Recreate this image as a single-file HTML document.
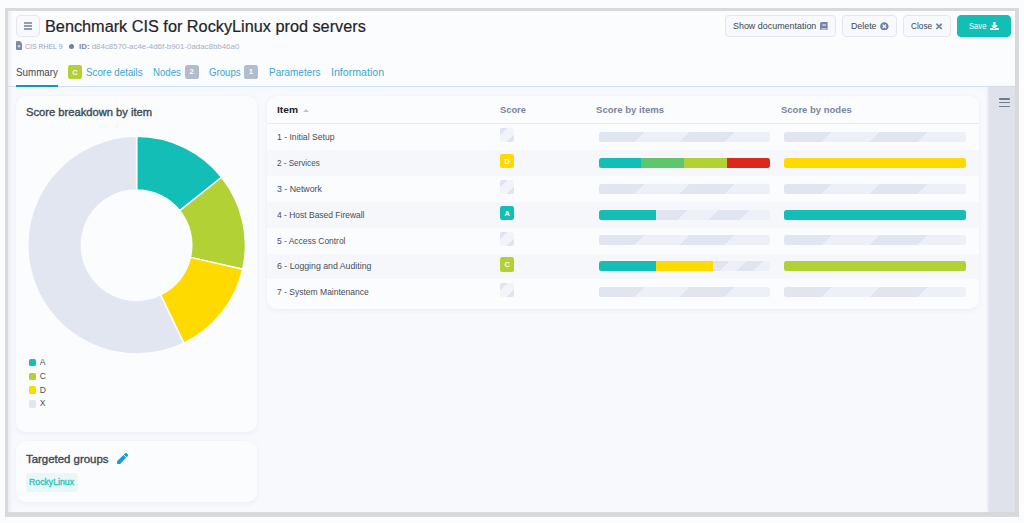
<!DOCTYPE html>
<html><head><meta charset="utf-8">
<style>
*{box-sizing:border-box;margin:0;padding:0}
html,body{width:1024px;height:523px;overflow:hidden;background:#fbfcfe;font-family:"Liberation Sans",sans-serif;color:#36474e}
.abs{position:absolute}
#frame{position:absolute;left:5px;top:8px;width:1014px;height:509px;background:#d9d9d9}
#inner{position:absolute;left:8px;top:11px;width:1007px;height:501px;background:#fbfcfe}
#content{position:absolute;left:8px;top:87px;width:1007px;height:425px;background:#f8f9fc}
.t{position:absolute;white-space:nowrap;line-height:1}
.card{position:absolute;background:#fbfcfe;border-radius:10px;box-shadow:0 1.5px 4px rgba(222,227,242,.45)}
.btn{position:absolute;height:22px;top:15px;border:1px solid #e3e6f0;border-radius:4px;background:#f8f9fc}
.badge{position:absolute;width:14px;height:14px;border-radius:2px;color:#fff;font-size:7px;font-weight:bold;text-align:center;line-height:14px}
.empty{position:absolute;width:14.200px;height:14.200px;border-radius:2px;background:linear-gradient(135deg,#dfe5f0 28%,#f3f4f9 28%,#f3f4f9 72%,#dfe5f0 72%)}
.row{position:absolute;left:267px;width:712px;height:25.9px}
.row.alt{background:#f6f7fb}
.bar{position:absolute;height:10px;border-radius:2.5px;overflow:hidden}
.bar i{position:absolute;top:0;height:10px;display:block}
.stripe{background:linear-gradient(135deg,#e0e5f0 25%,#eef0f7 25%,#eef0f7 50%,#e0e5f0 50%,#e0e5f0 75%,#eef0f7 75%)}
</style></head><body>
<div id="frame"></div><div id="inner"></div><div id="content"></div><div class="abs" style="left:8px;top:11px;width:5px;height:501px;background:linear-gradient(90deg,rgba(222,226,242,.55),rgba(222,226,242,0))"></div>

<div class="abs" style="left:16px;top:15px;width:24px;height:22.300px;border:1px solid #e4e7f2;border-radius:4px;background:#f8f9fc"></div>
<div class="abs" style="left:24px;top:22.1px;width:8px;height:1.600px;background:#929cb8"></div>
<div class="abs" style="left:24px;top:25.1px;width:8px;height:1.600px;background:#929cb8"></div>
<div class="abs" style="left:24px;top:28.1px;width:8px;height:1.600px;background:#929cb8"></div>
<div class="abs" style="left:68.7px;top:43.5px;width:5.400px;height:5.400px;border-radius:3px;background:#72809d"></div>
<div class="btn" style="left:725px;width:111px;"></div>
<div class="btn" style="left:842px;width:55px;"></div>
<div class="btn" style="left:903px;width:48px;"></div>
<div class="btn" style="left:957px;width:54px;background:#13beb7;border-color:#13beb7"></div>
<div class="abs" style="left:67.9px;top:64.7px;width:14.2px;height:14.3px;border-radius:2.2px;background:#b1d135"></div><div class="t" style="left:67.9px;width:14.2px;top:69px;font-size:7.5px;font-weight:bold;color:#fff;text-align:center;opacity:.95">C</div>
<div class="abs" style="left:184.6px;top:64.9px;width:14.4px;height:14.6px;border-radius:2.6px;background:#b3bbcd"></div><div class="t" style="left:184.6px;width:14.4px;top:68px;font-size:7.8px;font-weight:bold;color:#fff;text-align:center;opacity:.95">2</div>
<div class="abs" style="left:243.9px;top:64.9px;width:14.3px;height:14.6px;border-radius:2.6px;background:#b3bbcd"></div><div class="t" style="left:243.9px;width:14.3px;top:68px;font-size:7.8px;font-weight:bold;color:#fff;text-align:center;opacity:.95">1</div>
<div class="abs" style="left:8px;top:86px;width:1007px;height:1px;background:#d6dfee"></div>
<div class="abs" style="left:16px;top:85px;width:42px;height:2px;background:#0f96c5"></div>
<div class="abs" style="left:988.7px;top:87px;width:26.300px;height:425px;background:#dfe2eb;box-shadow:-1px 0 2.500px rgba(205,212,232,.7)"></div>
<div class="abs" style="left:998.8px;top:97.9px;width:11.200px;height:1.700px;border-radius:.8px;background:#727c8b"></div>
<div class="abs" style="left:998.8px;top:101.8px;width:11.200px;height:1.700px;border-radius:.8px;background:#727c8b"></div>
<div class="abs" style="left:998.8px;top:105.6px;width:11.200px;height:1.700px;border-radius:.8px;background:#727c8b"></div>
<div class="card" style="left:16.3px;top:95.8px;width:241px;height:335.800px"></div>
<svg class="abs" style="left:0;top:0" width="270" height="370" viewBox="0 0 270 370"><path d="M136.60 136.30A108.8 108.8 0 0 1 221.66 177.26L179.76 210.68A55.2 55.2 0 0 0 136.60 189.90Z" fill="#13beb7" stroke="#fbfcfe" stroke-width="1.5" stroke-linejoin="round"/><path d="M221.66 177.26A108.8 108.8 0 0 1 242.67 269.31L190.42 257.38A55.2 55.2 0 0 0 179.76 210.68Z" fill="#b1d135" stroke="#fbfcfe" stroke-width="1.5" stroke-linejoin="round"/><path d="M242.67 269.31A108.8 108.8 0 0 1 183.81 343.13L160.55 294.83A55.2 55.2 0 0 0 190.42 257.38Z" fill="#ffda00" stroke="#fbfcfe" stroke-width="1.5" stroke-linejoin="round"/><path d="M183.81 343.13A108.8 108.8 0 1 1 136.60 136.30L136.60 189.90A55.2 55.2 0 1 0 160.55 294.83Z" fill="#e1e6f0" stroke="#fbfcfe" stroke-width="1.5" stroke-linejoin="round"/></svg>
<div class="abs" style="left:28.9px;top:358.90px;width:7.300px;height:7.600px;border-radius:1.600px;background:#13beb7"></div>
<div class="abs" style="left:28.9px;top:372.62px;width:7.300px;height:7.600px;border-radius:1.600px;background:#b1d135"></div>
<div class="abs" style="left:28.9px;top:386.34px;width:7.300px;height:7.600px;border-radius:1.600px;background:#ffda00"></div>
<div class="abs" style="left:28.9px;top:400.06px;width:7.300px;height:7.600px;border-radius:1.600px;background:#e1e6f0"></div>
<div class="card" style="left:16.3px;top:440.7px;width:241px;height:61.700px"></div>
<div class="abs" style="left:26px;top:473px;width:52px;height:19px;border-radius:3px;background:#e7f8f7"></div>
<div class="card" style="left:267px;top:95.8px;width:712.300px;height:213.600px"></div>
<div class="abs" style="left:302.6px;top:108.5px;width:0;height:0;border-left:3.2px solid transparent;border-right:3.2px solid transparent;border-bottom:3.5px solid #b9c3dc"></div>
<div class="abs" style="left:267px;top:123px;width:712px;height:1px;background:#e6eaf3"></div>
<div class="empty" style="left:500.1px;top:127.9px"></div>
<div class="bar" style="left:598.7px;top:131.8px;width:171px"><i class="stripe" style="left:0.00px;width:171.00px"></i></div>
<div class="bar" style="left:783.8px;top:131.8px;width:182.2px"><i class="stripe" style="left:0.00px;width:182.20px"></i></div>
<div class="row alt" style="top:149.9px"></div>
<div class="abs" style="left:500.1px;top:153.70000000000002px;width:14.3px;height:14.4px;border-radius:2.2px;background:#ffda00"></div><div class="t" style="left:500.1px;width:14.3px;top:158px;font-size:7.4px;font-weight:bold;color:#fff;text-align:center;opacity:.95">D</div>
<div class="bar" style="left:598.7px;top:157.70000000000002px;width:171px"><i style="left:0.00px;width:42.75px;background:#13beb7"></i><i style="left:42.75px;width:42.75px;background:#5fc66e"></i><i style="left:85.50px;width:42.75px;background:#b1d135"></i><i style="left:128.25px;width:42.75px;background:#da291c"></i></div>
<div class="bar" style="left:783.8px;top:157.70000000000002px;width:182.2px"><i style="left:0.00px;width:182.20px;background:#ffda00"></i></div>
<div class="empty" style="left:500.1px;top:179.7px"></div>
<div class="bar" style="left:598.7px;top:183.60000000000002px;width:171px"><i class="stripe" style="left:0.00px;width:171.00px"></i></div>
<div class="bar" style="left:783.8px;top:183.60000000000002px;width:182.2px"><i class="stripe" style="left:0.00px;width:182.20px"></i></div>
<div class="row alt" style="top:201.7px"></div>
<div class="abs" style="left:500.1px;top:205.5px;width:14.3px;height:14.4px;border-radius:2.2px;background:#13beb7"></div><div class="t" style="left:500.1px;width:14.3px;top:210px;font-size:7.4px;font-weight:bold;color:#fff;text-align:center;opacity:.95">A</div>
<div class="bar" style="left:598.7px;top:209.5px;width:171px"><i style="left:0.00px;width:57.00px;background:#13beb7"></i><i class="stripe" style="left:57.00px;width:114.00px"></i></div>
<div class="bar" style="left:783.8px;top:209.5px;width:182.2px"><i style="left:0.00px;width:182.20px;background:#13beb7"></i></div>
<div class="empty" style="left:500.1px;top:231.5px"></div>
<div class="bar" style="left:598.7px;top:235.4px;width:171px"><i class="stripe" style="left:0.00px;width:171.00px"></i></div>
<div class="bar" style="left:783.8px;top:235.4px;width:182.2px"><i class="stripe" style="left:0.00px;width:182.20px"></i></div>
<div class="row alt" style="top:253.5px"></div>
<div class="abs" style="left:500.1px;top:257.3px;width:14.3px;height:14.4px;border-radius:2.2px;background:#b1d135"></div><div class="t" style="left:500.1px;width:14.3px;top:261px;font-size:7.4px;font-weight:bold;color:#fff;text-align:center;opacity:.95">C</div>
<div class="bar" style="left:598.7px;top:261.3px;width:171px"><i style="left:0.00px;width:57.00px;background:#13beb7"></i><i style="left:57.00px;width:57.00px;background:#ffda00"></i><i class="stripe" style="left:114.00px;width:57.00px"></i></div>
<div class="bar" style="left:783.8px;top:261.3px;width:182.2px"><i style="left:0.00px;width:182.20px;background:#b1d135"></i></div>
<div class="empty" style="left:500.1px;top:283.3px"></div>
<div class="bar" style="left:598.7px;top:287.2px;width:171px"><i class="stripe" style="left:0.00px;width:171.00px"></i></div>
<div class="bar" style="left:783.8px;top:287.2px;width:182.2px"><i class="stripe" style="left:0.00px;width:182.20px"></i></div>
<div class="t" id="t0" style="left:45.2px;top:19px;font-size:16px;font-weight:normal;-webkit-text-stroke:0.2px #1f2429;color:#1f2429;transform-origin:0 50%;transform:scaleX(1.0162)">Benchmark CIS for RockyLinux prod servers</div>
<div class="t" id="t1" style="left:24.7px;top:43px;font-size:7.6px;font-weight:normal;color:#99a2b7;transform-origin:0 50%;transform:scaleX(0.9129)">CIS RHEL 9</div>
<div class="t" id="t2" style="left:79.2px;top:43px;font-size:7.6px;font-weight:normal;color:#a5adc1;transform-origin:0 50%;transform:scaleX(1.0402)"><b style="color:#7d88a3">ID:</b> d84c8570-ac4e-4d6f-b901-0adac8bb46a0</div>
<div class="t" id="t3" style="left:732.5px;top:22px;font-size:9.3px;font-weight:normal;color:#36474e;transform-origin:0 50%;transform:scaleX(0.9594)">Show documentation</div>
<div class="t" id="t4" style="left:850.5px;top:22px;font-size:9.3px;font-weight:normal;color:#36474e;transform-origin:0 50%;transform:scaleX(0.9488)">Delete</div>
<div class="t" id="t5" style="left:911.2px;top:22px;font-size:9.3px;font-weight:normal;color:#36474e;transform-origin:0 50%;transform:scaleX(0.8873)">Close</div>
<div class="t" id="t6" style="left:968.6px;top:22px;font-size:9.3px;font-weight:normal;color:#fff;transform-origin:0 50%;transform:scaleX(0.8206)">Save</div>
<div class="t" id="t7" style="left:16.0px;top:67px;font-size:11px;font-weight:normal;color:#40494f;transform-origin:0 50%;transform:scaleX(0.8903)">Summary</div>
<div class="t" id="t8" style="left:86.3px;top:67px;font-size:11px;font-weight:normal;color:#3aa5cc;transform-origin:0 50%;transform:scaleX(0.8900)">Score details</div>
<div class="t" id="t9" style="left:153.3px;top:67px;font-size:11px;font-weight:normal;color:#3aa5cc;transform-origin:0 50%;transform:scaleX(0.8774)">Nodes</div>
<div class="t" id="t10" style="left:209.4px;top:67px;font-size:11px;font-weight:normal;color:#3aa5cc;transform-origin:0 50%;transform:scaleX(0.8759)">Groups</div>
<div class="t" id="t11" style="left:268.8px;top:67px;font-size:11px;font-weight:normal;color:#3aa5cc;transform-origin:0 50%;transform:scaleX(0.9057)">Parameters</div>
<div class="t" id="t12" style="left:330.5px;top:67px;font-size:11px;font-weight:normal;color:#3aa5cc;transform-origin:0 50%;transform:scaleX(0.9649)">Information</div>
<div class="t" id="t13" style="left:25.9px;top:108px;font-size:10.2px;font-weight:normal;-webkit-text-stroke:0.35px #414a53;color:#414a53;transform-origin:0 50%;transform:scaleX(1.0970)">Score breakdown by item</div>
<div class="t" id="t14" style="left:39.7px;top:358px;font-size:8.6px;font-weight:normal;color:#4a535c">A</div>
<div class="t" id="t15" style="left:39.7px;top:372px;font-size:8.6px;font-weight:normal;color:#4a535c">C</div>
<div class="t" id="t16" style="left:39.7px;top:386px;font-size:8.6px;font-weight:normal;color:#4a535c">D</div>
<div class="t" id="t17" style="left:39.7px;top:399px;font-size:8.6px;font-weight:normal;color:#4a535c">X</div>
<div class="t" id="t18" style="left:25.8px;top:455px;font-size:10.2px;font-weight:normal;-webkit-text-stroke:0.35px #414a53;color:#414a53;transform-origin:0 50%;transform:scaleX(1.1205)">Targeted groups</div>
<div class="t" id="t19" style="left:29.4px;top:478px;font-size:8.7px;font-weight:normal;-webkit-text-stroke:0.35px #2cc4bd;color:#2cc4bd;transform-origin:0 50%;transform:scaleX(1.0021)">RockyLinux</div>
<div class="t" id="t20" style="left:277.1px;top:105px;font-size:9.8px;font-weight:bold;color:#1f2429;transform-origin:0 50%;transform:scaleX(1.0419)">Item</div>
<div class="t" id="t21" style="left:500.1px;top:105px;font-size:9.6px;font-weight:bold;color:#7a849e;transform-origin:0 50%;transform:scaleX(0.9711)">Score</div>
<div class="t" id="t22" style="left:596.0px;top:105px;font-size:9.6px;font-weight:bold;color:#7a849e;transform-origin:0 50%;transform:scaleX(0.9976)">Score by items</div>
<div class="t" id="t23" style="left:780.8px;top:105px;font-size:9.6px;font-weight:bold;color:#7a849e;transform-origin:0 50%;transform:scaleX(0.9895)">Score by nodes</div>
<div class="t" id="t24" style="left:277.1px;top:133px;font-size:8.8px;font-weight:normal;color:#454e57;transform-origin:0 50%;transform:scaleX(0.9798)">1 - Initial Setup</div>
<div class="t" id="t25" style="left:277.1px;top:159px;font-size:8.8px;font-weight:normal;color:#454e57;transform-origin:0 50%;transform:scaleX(0.9192)">2 - Services</div>
<div class="t" id="t26" style="left:277.1px;top:185px;font-size:8.8px;font-weight:normal;color:#454e57;transform-origin:0 50%;transform:scaleX(0.9981)">3 - Network</div>
<div class="t" id="t27" style="left:277.1px;top:211px;font-size:8.8px;font-weight:normal;color:#454e57;transform-origin:0 50%;transform:scaleX(0.9622)">4 - Host Based Firewall</div>
<div class="t" id="t28" style="left:277.1px;top:237px;font-size:8.8px;font-weight:normal;color:#454e57;transform-origin:0 50%;transform:scaleX(0.9595)">5 - Access Control</div>
<div class="t" id="t29" style="left:277.1px;top:262px;font-size:8.8px;font-weight:normal;color:#454e57;transform-origin:0 50%;transform:scaleX(0.9948)">6 - Logging and Auditing</div>
<div class="t" id="t30" style="left:277.1px;top:288px;font-size:8.8px;font-weight:normal;color:#454e57;transform-origin:0 50%;transform:scaleX(0.9677)">7 - System Maintenance</div>
<!-- icons -->
<svg class="abs" style="left:16px;top:41px" width="6" height="9" viewBox="0 0 6 9"><path d="M0.800 0H3.800L6 2.200V8.200Q6 9 5.200 9H0.800Q0 9 0 8.200V0.800Q0 0 0.800 0Z" fill="#7c8ba8"/><circle cx="3" cy="5.300" r="1.300" fill="#cfd5e2"/></svg>
<svg class="abs" style="left:820.200px;top:21.600px" width="7.700" height="8.700" viewBox="0 0 448 512"><path fill="#7486a8" d="M448 360V24c0-13.300-10.700-24-24-24H96C43 0 0 43 0 96v320c0 53 43 96 96 96h328c13.300 0 24-10.700 24-24v-16c0-7.500-3.500-14.300-8.900-18.700-4.200-15.400-4.200-59.300 0-74.700 5.400-4.300 8.900-11.100 8.900-18.600zM128 134c0-3.300 2.700-6 6-6h212c3.300 0 6 2.700 6 6v20c0 3.300-2.700 6-6 6H134c-3.300 0-6-2.700-6-6v-20zm0 64c0-3.300 2.700-6 6-6h212c3.300 0 6 2.700 6 6v20c0 3.300-2.700 6-6 6H134c-3.300 0-6-2.700-6-6v-20zm253.400 250H96c-17.700 0-32-14.300-32-32 0-17.600 14.400-32 32-32h285.400c-1.900 17.100-1.900 46.900 0 64z"/></svg>
<svg class="abs" style="left:880.300px;top:21.600px" width="8.700" height="8.700" viewBox="0 0 512 512"><path fill="#6b7fa3" d="M256 8C119 8 8 119 8 256s111 248 248 248 248-111 248-248S393 8 256 8zm121.600 313.100c4.700 4.700 4.700 12.300 0 17L338 377.600c-4.700 4.700-12.300 4.700-17 0L256 312l-65.100 65.600c-4.700 4.700-12.300 4.700-17 0L134.400 338c-4.700-4.700-4.700-12.300 0-17l65.600-65-65.600-65.100c-4.700-4.700-4.700-12.300 0-17l39.600-39.600c4.700-4.700 12.300-4.700 17 0l65 65.700 65.100-65.600c4.700-4.700 12.300-4.700 17 0l39.600 39.600c4.700 4.700 4.700 12.300 0 17L312 256l65.600 65.100z"/></svg>
<svg class="abs" style="left:936.100px;top:21.500px" width="6.100" height="8.800" viewBox="0 0 352 512"><path fill="#6d7fa6" d="M242.720 256l100.070-100.070c12.280-12.280 12.280-32.190 0-44.480l-22.240-22.240c-12.280-12.280-32.190-12.280-44.480 0L176 189.280 75.930 89.210c-12.280-12.280-32.190-12.280-44.480 0L9.210 111.450c-12.280 12.280-12.280 32.190 0 44.480L109.280 256 9.210 356.070c-12.280 12.280-12.280 32.190 0 44.480l22.240 22.240c12.280 12.280 32.200 12.280 44.480 0L176 322.720l100.070 100.070c12.280 12.280 32.200 12.280 44.480 0l22.240-22.240c12.280-12.280 12.280-32.190 0-44.480L242.720 256z"/></svg>
<svg class="abs" style="left:990.300px;top:21.600px" width="8.800" height="8.800" viewBox="0 0 512 512"><path fill="#fff" d="M216 0h80c13.300 0 24 10.700 24 24v168h87.700c17.800 0 26.700 21.500 14.100 34.100L269.700 378.300c-7.500 7.500-19.800 7.500-27.300 0L90.100 226.100c-12.600-12.600-3.700-34.100 14.100-34.100H192V24c0-13.300 10.700-24 24-24zm296 376v112c0 13.300-10.700 24-24 24H24c-13.300 0-24-10.700-24-24V376c0-13.300 10.700-24 24-24h146.700l49 49c20.100 20.100 52.500 20.100 72.600 0l49-49H488c13.300 0 24 10.700 24 24zm-124 88c0-11-9-20-20-20s-20 9-20 20 9 20 20 20 20-9 20-20zm64 0c0-11-9-20-20-20s-20 9-20 20 9 20 20 20 20-9 20-20z"/></svg>
<svg class="abs" style="left:117.100px;top:453px" width="11.200" height="11.200" viewBox="0 0 512 512"><path fill="#1b9ccb" d="M290.740 93.240l128.020 128.020-277.990 277.990-114.140 12.600C11.350 513.540-1.560 500.620.14 485.340l12.700-114.220 277.900-277.880zm207.200-19.060l-60.110-60.110c-18.750-18.750-49.160-18.750-67.910 0l-56.550 56.550 128.020 128.020 56.550-56.550c18.750-18.760 18.750-49.160 0-67.910z"/></svg>

</body></html>
